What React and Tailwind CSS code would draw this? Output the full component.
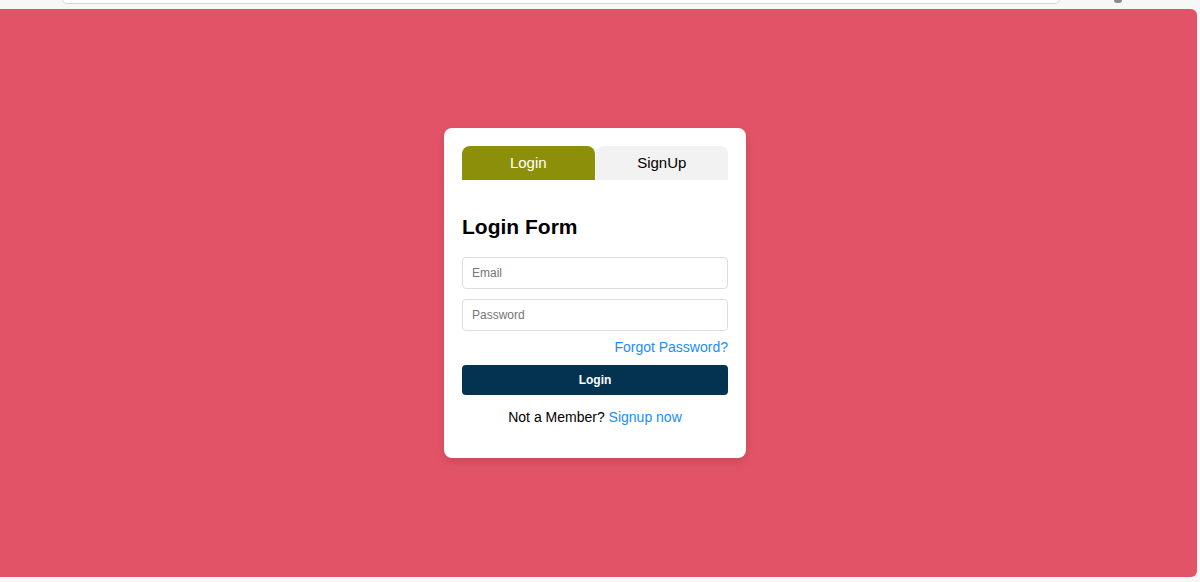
import React, { useState } from 'react';

const App = () => {
  const [tab, setTab] = useState('login');

  return (
    <div className="w-[1200px] h-[582px] bg-[#f7f7f7] flex flex-col overflow-hidden font-['Liberation_Sans',Arial,sans-serif]">
      {/* browser chrome strip */}
      <div className="h-[9px] shrink-0 flex items-start px-[62px] gap-[54px]">
        <div className="w-[998px] h-[5px] -mt-px bg-white border border-t-0 border-[#d6d6d6] rounded-b-[10px]" />
        <div className="w-[8px] h-[3px] rounded-b-full bg-[#8a8a8a]" />
      </div>

      {/* page */}
      <div className="h-[568px] w-[1197px] bg-[#e35367] rounded-r-[6px] flex items-start justify-center pt-[119px] pr-[7px]">
        <div className="w-[302px] bg-white rounded-[8px] shadow-[0_4px_10px_rgba(0,0,0,0.12)] px-[18px] pt-[18px] pb-[32px]">
          {/* tabs */}
          <div className="flex h-[34px]">
            <button
              onClick={() => setTab('login')}
              className={`flex-1 rounded-tl-[8px] rounded-tr-[8px] text-[15px] ${tab === 'login' ? 'bg-[#8c8f09] text-white' : 'bg-[#f2f2f2] text-black'}`}
            >
              Login
            </button>
            <button
              onClick={() => setTab('signup')}
              className={`flex-1 ml-px rounded-tr-[8px] rounded-tl-[8px] text-[15px] ${tab === 'signup' ? 'bg-[#8c8f09] text-white' : 'bg-[#f2f2f2] text-black'}`}
            >
              SignUp
            </button>
          </div>

          <h2 className="mt-[36px] text-[21px] font-bold text-black leading-none">Login Form</h2>

          <form className="mt-[20px] flex flex-col" onSubmit={(e) => e.preventDefault()}>
            <input
              type="email"
              placeholder="Email"
              className="h-[32px] w-full border border-[#dddddd] rounded-[4px] px-[9px] text-[12px] outline-none placeholder:text-[#767676]"
            />
            <input
              type="password"
              placeholder="Password"
              className="mt-[10px] h-[32px] w-full border border-[#dddddd] rounded-[4px] px-[9px] text-[12px] outline-none placeholder:text-[#767676]"
            />
            <a href="#" className="mt-[8px] self-end text-[14px] text-[#1a8cff] leading-[17px]">
              Forgot Password?
            </a>
            <button className="mt-[9px] h-[30px] w-full bg-[#033350] rounded-[4px] text-white text-[12px] font-bold">
              Login
            </button>
          </form>

          <p className="mt-[14px] text-center text-[14px] text-black leading-[17px]">
            Not a Member? <a href="#" className="text-[#1a8cff]">Signup now</a>
          </p>
        </div>
      </div>
    </div>
  );
};

export default App;
